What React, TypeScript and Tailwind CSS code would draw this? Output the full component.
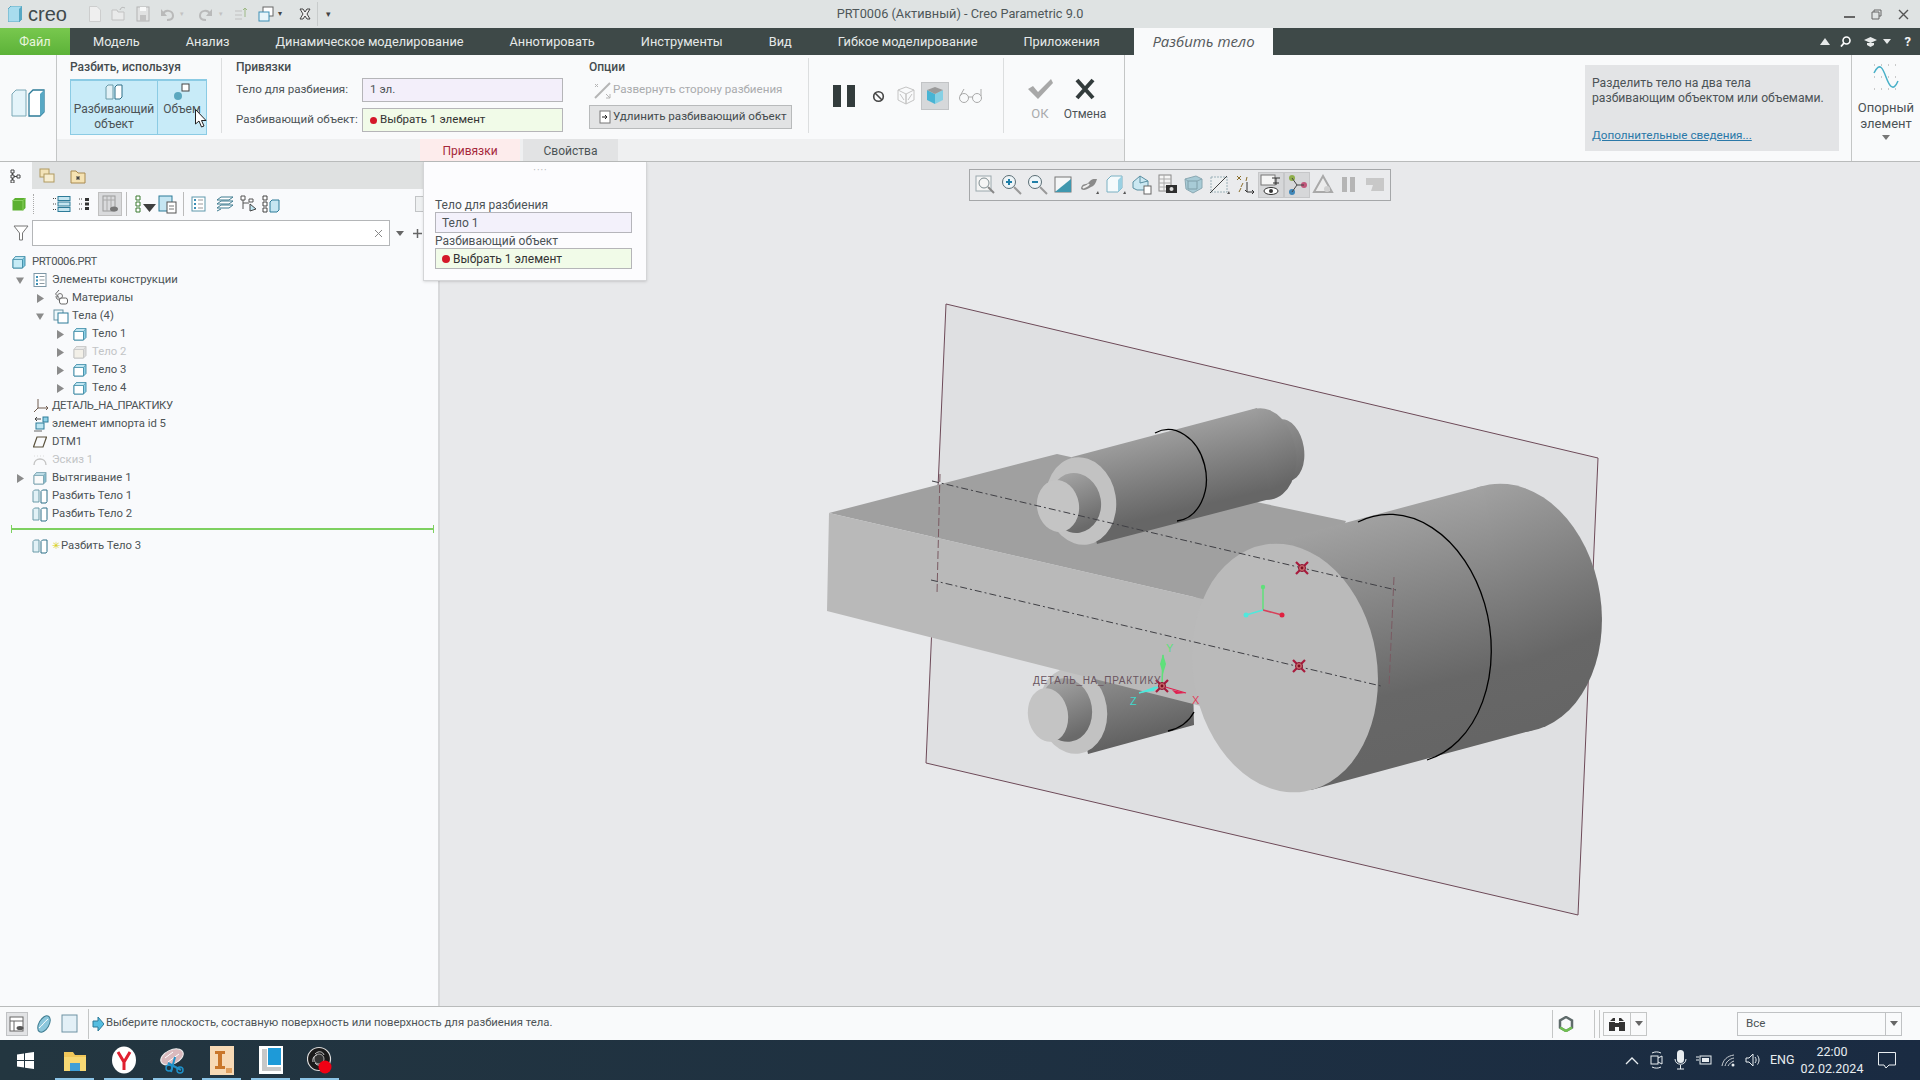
import type { ReactNode } from "react";

const MENU = ["Модель", "Анализ", "Динамическое моделирование", "Аннотировать", "Инструменты", "Вид", "Гибкое моделирование", "Приложения"];

const Ico = ({ s = 18, w, h, children, className = "" }: { s?: number; w?: number; h?: number; children: ReactNode; className?: string }) => (
  <svg width={w ?? s} height={h ?? s} viewBox={`0 0 ${w ?? s} ${h ?? s}`} fill="none" className={`shrink-0 ${className}`}>
    {children}
  </svg>
);

const Cube = ({ face = "#ffffff", side = "#8fd0e6", top = "#bfe6f2", line = "#3d8aa5" }) => (
  <Ico s={14}>
    <path d="M1 4.5 3.5 1.5H13V10.5L10.5 13H1Z" fill={side} stroke={line} strokeWidth="0.9" />
    <path d="M1 4.5H10.5V13H1Z" fill={face} stroke={line} strokeWidth="0.9" />
    <path d="M1 4.5 3.5 1.5H13L10.5 4.5Z" fill={top} stroke={line} strokeWidth="0.6" />
  </Ico>
);

const SplitIcon = () => (
  <Ico s={16} className="-ml-px">
    <path d="M1 3.5 2.5 2H7V14H1Z" fill="#e2f1f6" stroke="#6b9aa8" />
    <path d="M9 3.5 10.5 2H15V13.5L14 15H9Z" fill="#fff" stroke="#2d6f87" />
  </Ico>
);

const Arrow = ({ open }: { open?: boolean }) => (
  <svg width="8" height="9" viewBox="0 0 8 9">
    {open ? <path d="M0 1.5H8L4 8Z" fill="#8b8b8b" /> : <path d="M1 0 8 4.5 1 9Z" fill="#8b8b8b" />}
  </svg>
);

type Row = { label: string; level: number; arrow?: "open" | "closed"; icon: ReactNode; dim?: boolean; caps?: boolean };

const TREE: Row[] = [
  { label: "PRT0006.PRT", level: 0, caps: true, icon: <Cube face="#c6ebf6" side="#7ec8df" /> },
  {
    label: "Элементы конструкции",
    level: 1,
    arrow: "open",
    icon: (
      <Ico s={14}>
        <rect x="1" y="0.5" width="12" height="13" fill="#fff" stroke="#7c96a5" />
        <path d="M3 3h2v2H3zM3 6.5h2v2H3zM3 10h2v2H3z" fill="#3d8fb5" />
        <path d="M6.5 3.5h5M6.5 7h5M6.5 10.5h5" stroke="#8d9aa2" />
      </Ico>
    ),
  },
  {
    label: "Материалы",
    level: 2,
    arrow: "closed",
    icon: (
      <Ico s={16}>
        <path d="M6 0 2.5 4l3 3M3 6c0 3 2 4 4 4" stroke="#666" />
        <rect x="6.5" y="8" width="8" height="6" rx="2" stroke="#666" fill="#fff" />
        <circle cx="7" cy="6" r="2.5" stroke="#777" />
      </Ico>
    ),
  },
  {
    label: "Тела (4)",
    level: 2,
    arrow: "open",
    icon: (
      <Ico s={16}>
        <rect x="1" y="2" width="9" height="10" fill="#eef8fb" stroke="#6b93a3" />
        <rect x="5" y="5" width="10" height="10" fill="#fff" stroke="#2d7b98" />
      </Ico>
    ),
  },
  { label: "Тело 1", level: 3, arrow: "closed", icon: <Cube /> },
  { label: "Тело 2", level: 3, arrow: "closed", dim: true, icon: <Cube face="#f3f0e8" side="#dcdcdc" top="#e8e8e8" line="#c4c4c4" /> },
  { label: "Тело 3", level: 3, arrow: "closed", icon: <Cube /> },
  { label: "Тело 4", level: 3, arrow: "closed", icon: <Cube /> },
  {
    label: "ДЕТАЛЬ_НА_ПРАКТИКУ",
    level: 1,
    caps: true,
    icon: (
      <Ico s={16}>
        <path d="M5 1V10L1 14M5 10H15" stroke="#6f5b4e" />
        <path d="M13 8l2 2-2 2" stroke="#6f5b4e" />
      </Ico>
    ),
  },
  {
    label: "элемент импорта id 5",
    level: 1,
    icon: (
      <Ico s={16}>
        <rect x="10" y="1" width="5" height="5" fill="#8fd0e6" stroke="#2d7b98" />
        <path d="M8 3H2M4 1 2 3l2 2" stroke="#444" />
        <rect x="3" y="7" width="8" height="6" fill="#bfe6f2" stroke="#2d7b98" />
        <path d="M1 15H9" stroke="#666" />
      </Ico>
    ),
  },
  {
    label: "DTM1",
    level: 1,
    icon: (
      <Ico s={14}>
        <path d="M4 2H13.5L10 12H0.5Z" stroke="#5a513c" strokeWidth="1.2" />
      </Ico>
    ),
  },
  {
    label: "Эскиз 1",
    level: 1,
    dim: true,
    icon: (
      <Ico s={14}>
        <path d="M1 12C1 4 13 4 13 12" stroke="#c4c4c4" strokeWidth="1.4" />
        <path d="M1 3H13" stroke="#dcdcdc" strokeDasharray="1 2" />
      </Ico>
    ),
  },
  { label: "Вытягивание 1", level: 1, arrow: "closed", icon: <Cube face="#fafafa" side="#86bccd" top="#bcdce6" line="#7ba3b0" /> },
  { label: "Разбить Тело 1", level: 1, icon: <SplitIcon /> },
  { label: "Разбить Тело 2", level: 1, icon: <SplitIcon /> },
];

const TreeRow = ({ r }: { r: Row }) => (
  <div className="h-[18px] flex items-center" style={{ paddingLeft: r.level === 0 ? 12 : 14 + (r.level - 1) * 20 }}>
    {r.level > 0 && <span className="w-[19px] pl-[2px] flex items-center">{r.arrow && <Arrow open={r.arrow === "open"} />}</span>}
    <span className={`w-[14px] flex items-center ${r.level === 0 ? "mr-[6px]" : "mr-[5px]"}`}>{r.icon}</span>
    <span className={`${r.dim ? "text-[#c2c4c6]" : "text-[#4c5356]"} ${r.caps ? "tracking-[-0.4px]" : ""}`}>{r.label}</span>
  </div>
);

const TreeTools = () => (
  <div className="h-[30px] w-[423px] flex items-center">
    <span className="ml-[12px] w-[21px] flex">
      <Ico s={14}>
        <path d="M0.5 3.5 3 1H13.5V11L11 13.5H.5Z" fill="#5cb030" />
        <path d="M11 3.5V13.5M.5 3.5H11L13.5 1" stroke="#8ad060" />
      </Ico>
    </span>
    <span className="w-[3px] h-[20px] border-l border-dotted border-[#aaa]" />
    <span className="ml-[17px] w-[22px] flex">
      <Ico s={18}>
        <path d="M0 3.5H3M0 9H3M0 14.5H3" stroke="#444" strokeDasharray="1 1" />
        <rect x="5" y="1.5" width="12" height="4" fill="#c5e5f0" stroke="#2d7b98" />
        <rect x="5" y="7" width="12" height="4" fill="#c5e5f0" stroke="#2d7b98" />
        <rect x="5" y="12.5" width="12" height="4" fill="#c5e5f0" stroke="#2d7b98" />
      </Ico>
    </span>
    <span className="ml-[2px] w-[11px] flex">
      <Ico s={14}>
        <path d="M2 2h3M2 7h3M2 12h3" stroke="#444" strokeDasharray="1 1" />
        <path d="M8 1h4v3H8zM8 5.5h4v3H8zM8 10h4v3H8z" fill="#333" />
      </Ico>
    </span>
    <span className="ml-[10px] w-[24px] h-[24px] bg-[#d9dadc] border border-[#c0c0c0] flex items-center justify-center">
      <Ico s={18}>
        <rect x="2" y="1" width="12" height="15" stroke="#9a9a9a" />
        <path d="M2 5H14M6 1V16M10 1V16" stroke="#aaa" />
        <ellipse cx="13" cy="14" rx="4" ry="2.5" fill="#777" />
      </Ico>
    </span>
    <span className="ml-[4px] w-px h-[24px] bg-[#bbb]" />
    <span className="ml-[6px] w-[23px] flex">
      <Ico w={24} h={18}>
        <path d="M3 1h4v4H3zM3 7h4v4H3zM3 13h4v4H3z" stroke="#3a7a30" fill="#fff" />
        <path d="M10 9h13l-6.500 8Z" fill="#3f3f3f" />
      </Ico>
    </span>
    <span className="ml-[2px] w-[22px] flex">
      <Ico s={20}>
        <rect x="1" y="2" width="13" height="15" fill="#c6e6f2" stroke="#2d7b98" />
        <rect x="9" y="8" width="9" height="11" fill="#fff" stroke="#555" />
        <path d="M11 12h5M11 15h5" stroke="#777" />
      </Ico>
    </span>
    <span className="ml-[3px] w-px h-[24px] bg-[#bbb]" />
    <span className="ml-[7px] w-[25px] flex">
      <Ico s={16}>
        <rect x="1" y="1" width="13" height="14" fill="#fff" stroke="#5f98ab" />
        <path d="M3 4h2M3 8h2M3 12h2" stroke="#3d8fb5" strokeWidth="2" />
        <path d="M7 4h5M7 8h5M7 12h5" stroke="#999" />
      </Ico>
    </span>
    <span className="w-[24px] flex">
      <Ico s={18}>
        <path d="M1 5 5 2H17L13 5ZM1 9 5 6H17L13 9ZM1 13 5 10H17L13 13Z" fill="#fff" stroke="#3d7b8f" />
        <path d="M1 16 5 14" stroke="#3d7b8f" />
      </Ico>
    </span>
    <span className="w-[22px] flex">
      <Ico s={18}>
        <path d="M1 1h4v4H1zM9 4h4v3H9z" stroke="#555" fill="#fff" />
        <path d="M3 5V14M3 8H9" stroke="#555" />
        <path d="M10 9 16 14 10 16Z" fill="#bfe6f2" stroke="#444" />
      </Ico>
    </span>
    <span className="w-[20px] flex">
      <Ico s={18}>
        <path d="M1 1h4v4H1zM1 7h4v4H1zM1 13h4v4H1z" stroke="#444" fill="#fff" />
        <path d="M8 7 10 5H17V15L15 17H8Z" fill="#c6e6f2" stroke="#2d7b98" />
      </Ico>
    </span>
    <span className="ml-auto w-[8px] h-[16px] bg-[#eef0f1] border border-r-0 border-[#c2c4c6]" />
  </div>
);

const ViewIcons: ReactNode[] = [
  <><rect x="1" y="2" width="15" height="15" fill="#f5f5f5" stroke="#9aa8ad" /><circle cx="9" cy="9" r="5" stroke="#7e8c90" /><path d="m13 13 6 6" stroke="#888" strokeWidth="2" /></>,
  <><circle cx="8" cy="8" r="6.500" fill="#eef5f8" stroke="#5a6d75" /><path d="M5 8h6M8 5v6" stroke="#1f7fa8" strokeWidth="2" /><path d="m13 13 7 7" stroke="#999" strokeWidth="2" /></>,
  <><circle cx="8" cy="8" r="6.500" fill="#eef5f8" stroke="#5a6d75" /><path d="M5 8h6" stroke="#1f7fa8" strokeWidth="2" /><path d="m13 13 7 7" stroke="#999" strokeWidth="2" /></>,
  <><rect x="2" y="3" width="16" height="15" fill="#f4f6f7" stroke="#777" /><path d="M2 18 18 5V18Z" fill="#3f97ae" /></>,
  <><path d="M2 14c2-6 5-2 8-6 3-4 6-3 8-3-1 4-3 7-6 8-3 2-6 3-7 3-2 0-3-1-3-2Z" fill="#8a8a8a" /><path d="M4 14c2-2 4-1 6-4" stroke="#eee" strokeWidth="2" /><path d="m19 17 1 3h-3Z" fill="#555" /></>,
  <><path d="M2 6 6 2H17V14L13 18H2Z" fill="#f4fafc" stroke="#7ab0c2" /><path d="M13 6V18L17 14V2Z" fill="#9ad0e2" /><path d="m20 17 1 3h-3Z" fill="#555" /></>,
  <><path d="M2 8 9 2 17 7V16H6L2 14Z" fill="#cbe8f2" stroke="#5a8fa2" /><path d="M9 2V9L17 7" stroke="#5a8fa2" /><rect x="13" y="12" width="7" height="8" fill="#fff" stroke="#666" /></>,
  <><rect x="2" y="1" width="12" height="16" fill="#f5f5f5" stroke="#888" /><path d="M2 5H14M2 9H14M2 13H14M7 1V17" stroke="#aaa" /><rect x="9" y="11" width="11" height="8" fill="#2e2e2e" /><circle cx="14.500" cy="15" r="2" fill="#ddd" /></>,
  <><path d="M2 5 13 2l6 3v9l-9 5-7-4Z" fill="#a8cbd6" stroke="#8aa8b2" /><path d="M5 7h9v8H5Z" stroke="#7f9ea8" /><path d="M2 5l3 2M19 5l-5 2" stroke="#8aa8b2" /></>,
  <><path d="M2 3H18V18H2Z" fill="#eceff0" stroke="#9ab0b8" strokeDasharray="2 1" /><path d="M1 19 18 2" stroke="#444" /><path d="m20 17 1 3h-3Z" fill="#555" /></>,
  <><path d="M2 2l4 4M6 2 2 6M8 9 6 13M12 3l-1 4M4 18l2-4" stroke="#8a6d2a" /><path d="M12 8V18H19M12 18l-2-2M17 16l2 2-2 2" stroke="#333" /></>,
  <><rect x="1" y="1" width="14" height="10" fill="#f5f5f5" stroke="#777" /><path d="M12 4h8M16 4v7M13 9h6" stroke="#333" /><ellipse cx="11" cy="17" rx="7" ry="3.500" fill="#fff" stroke="#333" /><circle cx="11" cy="17" r="2" fill="#333" /></>,
  <><circle cx="6" cy="4" r="3" fill="#8fae4c" /><circle cx="18" cy="11" r="3" fill="#c0567a" /><circle cx="6" cy="18" r="3" fill="#3f86b8" /><path d="M6 4 11 11 6 18M11 11H18" stroke="#444" /></>,
  <><path d="M11 2 20 18H2Z" stroke="#a9a9a9" strokeWidth="2" fill="#ececec" /><circle cx="15" cy="15" r="3" fill="#d0d0d0" /></>,
  <><path d="M4 3h5v15H4zM12 3h5v15h-5z" fill="#b5b5b5" /></>,
  <><path d="M2 4H20V17H7L9 11 2 11Z" fill="#c8c8c8" /></>,
];

const ViewToolbar = () => (
  <div className="absolute left-[529px] top-[7px] w-[422px] h-[32px] bg-[#eaebed] border border-[#a5a7a9] flex items-center pl-[3px]">
    {ViewIcons.map((ic, i) => (
      <span key={i} className={`w-[26px] h-[26px] flex items-center justify-center mr-[-0.05px] ${i === 11 || i === 12 ? "bg-[#d6d7d9] border border-[#c6c7c9]" : ""}`}>
        <Ico s={22}>{ic}</Ico>
      </span>
    ))}
  </div>
);

const Marker = ({ x, y }: { x: number; y: number }) => (
  <g transform={`translate(${x} ${y})`}>
    <path d="M-6-6-2-2M6-6 2-2M-6 6-2 2M6 6 2 2" stroke="#a81a3c" strokeWidth="2.200" />
    <circle r="3.500" fill="#c9666a" stroke="#8a1030" />
    <circle r="1.400" fill="#7a1020" />
  </g>
);

const Model = () => (
  <svg width="1480" height="844" viewBox="440 162 1480 844" fill="none" className="absolute inset-0">
    <defs>
      <linearGradient id="big" gradientUnits="userSpaceOnUse" x1="1375" y1="500" x2="1435" y2="750">
        <stop offset="0" stopColor="#a6a6a6" />
        <stop offset="0.75" stopColor="#676767" />
        <stop offset="1" stopColor="#656565" />
      </linearGradient>
      <linearGradient id="up" gradientUnits="userSpaceOnUse" x1="1165" y1="420" x2="1190" y2="525">
        <stop offset="0" stopColor="#a5a5a5" />
        <stop offset="0.85" stopColor="#666666" />
        <stop offset="1" stopColor="#666666" />
      </linearGradient>
      <linearGradient id="low" gradientUnits="userSpaceOnUse" x1="1130" y1="668" x2="1148" y2="742">
        <stop offset="0" stopColor="#8f8f8f" />
        <stop offset="1" stopColor="#5f5f5f" />
      </linearGradient>
      <linearGradient id="step" x1="0" y1="0" x2="0.2" y2="1">
        <stop offset="0" stopColor="#a8a8a8" />
        <stop offset="1" stopColor="#6a6a6a" />
      </linearGradient>
    </defs>
    <polygon points="946,304 1598,458 1578,915 926,763" fill="#dfe0e2" stroke="#6d4a58" strokeWidth="1" />

    {/* block top */}
    <polygon points="829,513 1057,454 1075,458 1261,503 1346,521 1290,640 1194,597" fill="#a0a0a0" />

    {/* upper shaft */}
    <ellipse cx="1285" cy="450" rx="19" ry="31" transform="rotate(-9 1285 450)" fill="url(#up)" />
    <ellipse cx="1264" cy="454" rx="32" ry="46" transform="rotate(-9 1264 454)" fill="url(#up)" />
    <polygon points="1072,457 1257,408 1270,499 1097,544" fill="url(#up)" />
    <path d="M1155 433A35 46 -9 1 1 1177 521" stroke="#000" strokeWidth="1.300" />
    <ellipse cx="1081" cy="501" rx="35" ry="44" transform="rotate(-9 1081 501)" fill="#c2c2c2" />
    <ellipse cx="1075" cy="503" rx="26" ry="30" transform="rotate(-9 1075 503)" fill="url(#step)" />
    <ellipse cx="1058" cy="506" rx="21" ry="26" transform="rotate(-9 1058 506)" fill="#c4c4c4" />

    {/* lower shaft */}
    <polygon points="1070,664 1192,640 1194,725 1088,754" fill="url(#low)" />
    <path d="M1168 731Q1186 727 1194 712" stroke="#000" strokeWidth="1.300" />
    <ellipse cx="1073" cy="711" rx="34" ry="43" transform="rotate(-9 1073 711)" fill="#c2c2c2" />
    <ellipse cx="1066" cy="710" rx="26" ry="32" transform="rotate(-9 1066 710)" fill="url(#step)" />
    <ellipse cx="1048" cy="715" rx="20" ry="27" transform="rotate(-9 1048 715)" fill="#c4c4c4" />

    {/* block front */}
    <polygon points="829,513 1194,597 1260,612 1260,721 827,611" fill="#b9b9b9" />

    {/* main cylinder */}
    <ellipse cx="1509" cy="608" rx="92" ry="125" transform="rotate(-9 1509 608)" fill="url(#big)" />
    <polygon points="1259,546 1483,486 1533,730 1311,790" fill="url(#big)" />
    <path d="M1358 522A92 125 -9 1 1 1427 760" stroke="#000" strokeWidth="1.300" />
    <ellipse cx="1285" cy="668" rx="92" ry="125" transform="rotate(-9 1285 668)" fill="#bababa" />

    {/* sketch lines */}
    <g stroke="#3f3f44" strokeWidth="1" strokeDasharray="7 3 2 3">
      <path d="M932 481 1396 590" />
      <path d="M931 580 1381 686" />
    </g>
    <g stroke="#7a5a62" strokeWidth="1" strokeDasharray="8 3">
      <path d="M940 474 937 594" />
      <path d="M1394 577 1389 687" />
    </g>

    <Marker x={1302} y={568} />
    <Marker x={1299} y={666} />

    {/* csys */}
    <path d="M1263 610V587" stroke="#5fe07a" strokeWidth="1.500" />
    <circle cx="1263" cy="587" r="2.200" fill="#5fe07a" />
    <path d="M1263 610 1282 615" stroke="#d8405a" strokeWidth="1.500" />
    <circle cx="1282" cy="615" r="2.500" fill="#e02040" />
    <path d="M1263 610 1246 615" stroke="#50e8dc" strokeWidth="1.500" />
    <circle cx="1246" cy="615" r="2.500" fill="#50e8dc" />

    <path d="M1162 686 1163 655" stroke="#5fe07a" strokeWidth="1.500" />
    <path d="M1163 654 1160 664 1163 674 1166 664Z" fill="#5fe07a" />
    <path d="M1162 686 1186 693" stroke="#e02050" strokeWidth="1.200" />
    <path d="M1172 690 1186 693 1176 694Z" fill="#e02050" />
    <path d="M1162 686 1139 693" stroke="#50e8dc" strokeWidth="1.500" />
    <path d="M1139 693 1156 686 1154 691Z" fill="#50e8dc" />
    <Marker x={1162} y={686} />
    <g fontFamily="'Liberation Sans', sans-serif" fontSize="11">
      <text x="1166" y="652" fill="#5fe07a">Y</text>
      <text x="1192" y="704" fill="#e0405a">X</text>
      <text x="1130" y="705" fill="#40d8cc">Z</text>
      <text x="1033" y="684" fill="#6a5560" letterSpacing="0.700" fontSize="10">ДЕТАЛЬ_НА_ПРАКТИКУ</text>
    </g>
  </svg>
);

const Taskbar = () => (
  <div className="h-[40px] bg-gradient-to-r from-[#233640] to-[#1a2b42] flex items-center text-[#e8edf0] relative">
    <span className="w-[50px] flex justify-center pl-[1px]">
      <svg width="17" height="17" viewBox="0 0 17 17">
        <path d="M0 2.500 7 1.500V8H0ZM8 1.300 17 0V8H8ZM0 9H7V15.500L0 14.500ZM8 9H17V17L8 15.700Z" fill="#fff" />
      </svg>
    </span>
    {[
      <svg width="26" height="26" viewBox="0 0 26 26" key="f">
        <path d="M2 5h9l2 3h11v16H2Z" fill="#f0c75a" />
        <path d="M2 10h22v14H2Z" fill="#f7d873" />
        <path d="M8 16h10v8H8Z" fill="#3f9fd8" />
      </svg>,
      <svg width="26" height="28" viewBox="0 0 26 28" key="y">
        <ellipse cx="13" cy="14" rx="12" ry="13.500" fill="#fff" />
        <path d="M7 6 13 16 19 6M13 16V24" stroke="#e02030" strokeWidth="3" fill="none" />
      </svg>,
      <svg width="28" height="28" viewBox="0 0 28 28" key="s">
        <ellipse cx="13" cy="11" rx="12" ry="7" transform="rotate(-25 13 11)" fill="#d9b9bd" stroke="#eee" />
        <path d="M6 12 14 6M9 16l11-8" stroke="#fff" />
        <path d="M9 17 22 24M16 11 12 26" stroke="#1f90c8" strokeWidth="2" />
        <circle cx="10" cy="22" r="3" stroke="#1f90c8" strokeWidth="1.500" fill="none" />
        <circle cx="21" cy="24" r="3" stroke="#1f90c8" strokeWidth="1.500" fill="none" />
      </svg>,
      <svg width="24" height="29" viewBox="0 0 24 29" key="i">
        <rect width="24" height="29" fill="#f7d9b5" />
        <path d="M5 5h10v3h-3v12h3v3H5v-3h3V8H5Z" fill="#c9762a" />
        <path d="M16 22h6v5h-6Z" fill="#e0a060" />
      </svg>,
      <svg width="24" height="28" viewBox="0 0 24 28" key="w">
        <rect width="24" height="28" fill="#fff" />
        <rect x="9" y="2" width="13" height="17" fill="#1e9ad8" />
        <path d="M3 3h5v18h14v4H3Z" fill="#c8c8c8" />
      </svg>,
      <svg width="26" height="28" viewBox="0 0 26 28" key="o">
        <circle cx="12" cy="13" r="11.500" fill="#1a1a1a" stroke="#ddd" strokeWidth="1.200" />
        <circle cx="12" cy="13" r="5" fill="#333" stroke="#aaa" />
        <path d="M8 8c4-4 8-2 9 1M6 16c-1-4 2-7 4-7M18 17c-3 3-8 3-10 0" stroke="#ccc" fill="none" />
        <circle cx="18" cy="21" r="6.500" fill="#f00014" />
      </svg>,
    ].map((ic, i) => (
      <span key={i} className="w-[49px] h-[40px] flex items-center justify-center relative">
        {ic}
        <span className="absolute bottom-0 left-[5px] right-[5px] h-[2px] bg-[#8cc4e6]" />
      </span>
    ))}
    <div className="ml-auto flex items-center h-full">
      <svg width="14" height="9" viewBox="0 0 14 9" className="mr-[11px]"><path d="M1 8 7 2l6 6" stroke="#e8edf0" strokeWidth="1.300" fill="none" /></svg>
      <svg width="13" height="18" viewBox="0 0 13 18" className="mr-[11px]"><rect x="1" y="5" width="7" height="8" stroke="#e8edf0" fill="none" /><path d="M8 7 12 5V13L8 11M2 2c3-1.500 6-1.500 9 0M2 16c3 1.500 6 1.500 9 0" stroke="#e8edf0" fill="none" /></svg>
      <svg width="13" height="20" viewBox="0 0 13 20" className="mr-[9px]"><rect x="3" y="0" width="7" height="13" rx="3.500" fill="#e8edf0" /><path d="M1 9c0 7 11 7 11 0M6.500 15v4M3 19h7" stroke="#e8edf0" fill="none" /></svg>
      <svg width="16" height="11" viewBox="0 0 16 11" className="mr-[9px]"><rect x="4" y="1" width="11" height="8" stroke="#e8edf0" fill="none" /><rect x="6" y="3" width="7" height="4" fill="#e8edf0" /><path d="M0 2h3M0 5h3" stroke="#e8edf0" /></svg>
      <svg width="14" height="13" viewBox="0 0 14 13" className="mr-[10px]"><path d="M1 12C2 6 6 2 13 1M4 12C5 8 8 5 13 4M7 12C8 10 10 8 13 7" stroke="#c8cdd2" fill="none" /><circle cx="12" cy="11" r="1.500" fill="#e8edf0" /></svg>
      <svg width="16" height="14" viewBox="0 0 16 14" className="mr-[9px]"><path d="M1 5H4L8 1V13L4 9H1Z" stroke="#e8edf0" fill="none" /><path d="M10 4c1.500 2 1.500 4 0 6M12.500 2.500c2 3 2 6 0 9" stroke="#e8edf0" fill="none" /></svg>
      <span className="text-[12.500px] w-[27px] mr-[4px] whitespace-nowrap">ENG</span>
      <span className="w-[62px] flex flex-col items-center text-[12.500px] leading-[17px] mr-[15px]">
        <span>22:00</span>
        <span>02.02.2024</span>
      </span>
      <svg width="18" height="17" viewBox="0 0 18 17" className="mr-[24px]"><path d="M.5.5H17.500V13H11L8 16 6 13H.5Z" stroke="#e8edf0" fill="none" /></svg>
    </div>
  </div>
);

export default function App() {
  return (
    <div className="w-[1920px] h-[1080px] overflow-hidden flex flex-col bg-[#e8e9eb] text-[11.600px] font-['Roboto','Open_Sans',sans-serif] text-[#4c5356]">
      {/* title bar */}
      <div className="h-[28px] bg-[#dfe3e3] flex items-center shrink-0">
        <div className="flex-1 basis-0 flex items-center">
          <span className="ml-[8px] mr-[6px] flex">
            <Ico w={14} h={16}>
              <path d="M0 3 3 0H14V13L11 16H0Z" fill="#a8dcee" stroke="#5fa9c2" />
              <path d="M11 3V16L14 13V0Z" fill="#58a8c4" />
            </Ico>
          </span>
          <span className="w-[55px] text-[20px] leading-none text-[#404a4c] font-['Liberation_Sans',sans-serif]">creo</span>
          <span className="flex items-center opacity-80">
            <span className="w-[24px] flex justify-center"><Ico w={12} h={16}><path d="M.5.5H8L11.500 4V15.500H.5Z" stroke="#c9c9c9" fill="#f3f3f3" /></Ico></span>
            <span className="w-[24px] flex justify-center"><Ico w={16} h={16}><path d="M1 4h5l1 2h6v8H1Z" stroke="#bbb" fill="#ececec" /><path d="M9 4c1-3 3-3 5-2" stroke="#aaa" /></Ico></span>
            <span className="w-[24px] flex justify-center"><Ico w={14} h={16}><rect x="1" y="1" width="12" height="14" stroke="#aaa" fill="#e2e2e2" /><rect x="4" y="9" width="6" height="6" fill="#bbb" /><rect x="4" y="1" width="6" height="4" fill="#fff" /></Ico></span>
            <span className="w-[25px] flex justify-center"><Ico s={15}><path d="M3 7c2-5 10-4 10 2 0 3-3 4-6 4" stroke="#b0b0b0" strokeWidth="2" /><path d="M1 2V9H7Z" fill="#b0b0b0" /></Ico></span>
            <span className="w-[12px] text-[7px] text-[#bbb]">▾</span>
            <span className="w-[27px] flex justify-center"><Ico s={15}><path d="M12 7C10 2 2 3 2 9c0 3 3 4 6 4" stroke="#b0b0b0" strokeWidth="2" /><path d="M14 2V9H8Z" fill="#b0b0b0" /></Ico></span>
            <span className="w-[12px] text-[7px] text-[#bbb]">▾</span>
            <span className="w-[21px] flex justify-center"><Ico s={15}><path d="M1 4h7M1 8h7M1 12h7" stroke="#bbb" /><path d="M11 1v9M9 3l2-2 2 2" stroke="#8fb070" /></Ico></span>
          </span>
          <span className="ml-[2px] w-[24px] flex justify-center"><Ico s={16}><rect x="5" y="1" width="10" height="9" stroke="#666" fill="#fff" /><rect x="1" y="6" width="10" height="9" stroke="#3d8fb5" fill="#e8f5fa" /></Ico></span>
          <span className="w-[12px] text-[8px] text-[#444]">▾</span>
          <span className="ml-[9px] w-[14px] flex"><Ico s={12}><path d="M1 1h3l2 3 2-3h3L8 6l3 5H8L6 8l-2 3H1l3-5Z" fill="#eee" stroke="#444" /></Ico></span>
          <span className="ml-[4px] mr-[8px] w-px h-[24px] bg-[#c8cccc]" />
          <span className="text-[9px] text-[#444] leading-none">▾</span>
        </div>
        <span className="text-[#4e5759] text-[12.750px] whitespace-nowrap">PRT0006 (Активный) - Creo Parametric 9.0</span>
        <div className="flex-1 basis-0 flex justify-end items-center text-[#555]">
          <span className="w-[11px] h-[2px] bg-[#666] mt-[6px] mr-[16px]" />
          <span className="mr-[16px] flex"><Ico s={11}><path d="M3 3V1H10V7H8M1 3H8V10H1Z" stroke="#666" /></Ico></span>
          <span className="mr-[11px] flex"><Ico s={11}><path d="M1 1 10 10M10 1 1 10" stroke="#555" strokeWidth="1.400" /></Ico></span>
        </div>
      </div>

      {/* menu */}
      <div className="h-[27px] bg-[#3e4948] flex items-center shrink-0 text-[12.750px] text-[#e6e9e9] relative">
        <span className="w-[70px] h-full bg-gradient-to-b from-[#78c84e] to-[#5cb238] flex items-center justify-center text-[#e8f5dc]">Файл</span>
        <div className="w-[1064px] flex items-center pl-[23px] gap-[46px]">
          {MENU.map((m) => (
            <span key={m} className="whitespace-nowrap">{m}</span>
          ))}
        </div>
        <span className="w-[139px] h-full bg-[#f9fafb] text-[#55595b] text-[15px] font-['Open_Sans',sans-serif] italic flex items-center justify-center">Разбить тело</span>
        <div className="ml-auto flex items-center text-white">
          <span className="mr-[10px] flex"><Ico w={10} h={7}><path d="M0 7 5 0l5 7Z" fill="#e6e9e9" /></Ico></span>
          <span className="mr-[13px] flex"><Ico s={11}><circle cx="6.500" cy="4.500" r="3.500" stroke="#fff" strokeWidth="1.600" /><path d="M4 7 1 10.500" stroke="#fff" strokeWidth="1.800" /></Ico></span>
          <span className="mr-[6px] flex"><Ico w={13} h={10}><path d="M6.500 0 13 3 6.500 6 0 3ZM3 6v2l3.500 2L10 8V6" fill="#e6e9e9" /></Ico></span>
          <span className="mr-[14px] flex"><Ico w={8} h={5}><path d="M0 0h8L4 5Z" fill="#e6e9e9" /></Ico></span>
          <span className="mr-[9px] font-bold text-[13px] text-[#f4f4f4]">?</span>
        </div>
      </div>

      {/* ribbon */}
      <div className="h-[107px] bg-[#f9fafb] border-b border-[#b9bbbb] flex shrink-0">
        <div className="w-[57px] border-r border-[#c4c6c6] flex items-center justify-center pb-[11px]">
          <Ico w={34} h={28}>
            <path d="M1 5 5 1H15V27H1Z" fill="#e4f4fa" stroke="#7ba8b6" />
            <path d="M18 5 22 1H33V23L29 27H18Z" fill="#ffffff" stroke="#2d7b98" strokeWidth="1.300" />
            <path d="M29 5V27L33 23V1Z" fill="#58a8c4" />
          </Ico>
        </div>
        <div className="w-[1068px] border-r border-[#c4c6c6] flex flex-col">
          <div className="h-[84px] flex items-stretch">
            <div className="w-[165px] pl-[13px] pt-[5px] my-[3px] mb-[6px] border-r border-[#dcdedf] shrink-0">
              <div className="font-medium text-[12px] leading-[15px] text-[#454c4f] -mt-[3px] mb-[4px]">Разбить, используя</div>
              <div className="w-[137px] h-[56px] bg-[#c8ebf8] border border-[#8bcbe4] border-t-2 flex text-center text-[12px] leading-[15px]">
                <div className="w-[87px] border-r border-[#8bcbe4] flex flex-col items-center">
                  <Ico w={18} h={18} className="mt-[2px]">
                    <path d="M1 4 3 2H8V16H1Z" stroke="#6b9aa8" fill="#e2f1f6" />
                    <path d="M10 4 12 2H17V14L15 16H10Z" stroke="#2d6f87" fill="#fff" />
                  </Ico>
                  <span className="mt-[1px]">Разбивающий</span>
                  <span>объект</span>
                </div>
                <div className="relative flex-1 flex flex-col items-center">
                  <Ico w={18} h={18} className="mt-[2px]">
                    <circle cx="5" cy="13" r="4" fill="#5ca8bf" />
                    <rect x="9" y="1" width="7" height="7" fill="#fff" stroke="#444" />
                  </Ico>
                  <span className="mt-[1px]">Объем</span>
                  <svg width="12" height="19" viewBox="0 0 12 19" className="absolute left-[37px] top-[28px]">
                    <path d="M.5.5V15L4 12 6.500 18 9 17 6.500 11.500H11Z" fill="#fff" stroke="#222" />
                  </svg>
                </div>
              </div>
            </div>
            <div className="w-[367px] pl-[14px] pt-[5px] shrink-0">
              <div className="font-medium text-[12px] leading-[15px] text-[#454c4f] mb-[3px]">Привязки</div>
              <div className="flex items-center h-[24px] mb-[6px]">
                <span className="w-[126px]">Тело для разбиения:</span>
                <span className="w-[201px] h-[24px] bg-[#f3effa] border border-[#b5b5b8] flex items-center pl-[7px]">1 эл.</span>
              </div>
              <div className="flex items-center h-[24px]">
                <span className="w-[126px] whitespace-nowrap">Разбивающий объект:</span>
                <span className="w-[201px] h-[24px] bg-[#f1fbe8] border border-[#b5b5b8] flex items-center pl-[7px] text-[#333]">
                  <span className="w-[7px] h-[7px] rounded-full bg-[#d41828] mr-[3px]" />
                  Выбрать 1 элемент
                </span>
              </div>
            </div>
            <div className="w-[220px] pt-[5px] my-[3px] mb-[6px] border-r border-[#dcdedf] shrink-0">
              <div className="font-medium text-[12px] leading-[15px] text-[#454c4f] -mt-[3px] mb-[3px]">Опции</div>
              <div className="flex items-center h-[24px] text-[#a9abad] ml-[4px] mb-[3px]">
                <Ico s={19} className="mr-[1px]">
                  <path d="M2 17 17 2" stroke="#b5b5b5" strokeWidth="2" />
                  <path d="M2 3l3 3M5 3 2 6M13 13l4 4M17 13v4h-4" stroke="#b5b5b5" />
                </Ico>
                Развернуть сторону разбиения
              </div>
              <div className="w-[203px] h-[24px] bg-[#e2e3e4] border border-[#b8babb] flex items-center pl-[7px] whitespace-nowrap text-[#444b4e]">
                <Ico s={14} className="mr-[2px]">
                  <rect x="3" y="1" width="10" height="12" fill="#fff" stroke="#777" />
                  <path d="M5 7h5M8 5l2 2-2 2" stroke="#222" />
                </Ico>
                Удлинить разбивающий объект
              </div>
            </div>
            <div className="w-[195px] my-[3px] mb-[6px] border-r border-[#dcdedf] flex items-center shrink-0">
              <span className="ml-[24px] flex gap-[6px]">
                <span className="w-[8px] h-[22px] bg-[#333c3c]" />
                <span className="w-[8px] h-[22px] bg-[#333c3c]" />
              </span>
              <span className="ml-[17px] flex mt-[1px]">
                <Ico s={13}><circle cx="6.500" cy="6.500" r="4.800" stroke="#444" strokeWidth="1.600" /><path d="M3 3l7 7" stroke="#444" strokeWidth="1.600" /></Ico>
              </span>
              <span className="ml-[11px] flex">
                <Ico s={20}><path d="M2 4 10 8V18L2 14ZM18 4 10 8V18L18 14ZM2 4 10 1l8 3" stroke="#c4c4c4" /><path d="M4 8l4 6M16 8l-4 6" stroke="#c4c4c4" /></Ico>
              </span>
              <span className="ml-[5px] w-[28px] h-[28px] bg-[#d6d8da] border border-[#c2c4c6] flex items-center justify-center">
                <Ico s={20}><path d="M2 4 10 8V18L2 14Z" fill="#48b4d4" /><path d="M18 4 10 8V18L18 14Z" fill="#86d0e4" /><path d="M2 4 10 1l8 3-8 4Z" fill="#9a9a9a" /></Ico>
              </span>
              <span className="ml-[9px] flex">
                <Ico w={26} h={16}><circle cx="6" cy="10" r="4.500" stroke="#aaa" /><circle cx="19" cy="10" r="4.500" stroke="#aaa" /><path d="M10 9h5M2 8l4-7M23 8V1" stroke="#aaa" /></Ico>
              </span>
            </div>
            <div className="flex-1 flex my-[3px] mb-[6px]">
              <div className="ml-[20px] w-[32px] flex flex-col items-center text-[#a9abad]">
                <Ico w={28} h={22} className="mt-[20px]"><path d="M2 11l5-3 5 6L25 1l2 4-15 16Z" fill="#a8a8a8" /></Ico>
                <span className="mt-[6px] text-[13px] leading-[16px]">ОК</span>
              </div>
              <div className="ml-[6px] w-[46px] flex flex-col items-center">
                <Ico s={22} className="mt-[20px]"><path d="M3 2 19 20M19 2 3 20" stroke="#333c3c" strokeWidth="4" /></Ico>
                <span className="mt-[6px] text-[12px] leading-[16px]">Отмена</span>
              </div>
            </div>
          </div>
          <div className="h-[22px] bg-[#eff0f1] flex pl-[363px] leading-[24px] text-[12px] text-center">
            <span className="w-[100px] bg-[#fdecec] text-[#a5283a]">Привязки</span>
            <span className="w-[95px] ml-[3px] bg-[#e2e3e4]">Свойства</span>
          </div>
        </div>
        <div className="flex-1" />
        <div className="w-[254px] h-[86px] mt-[10px] mr-[12px] bg-[#e3e4e6] pl-[7px] pt-[11px] text-[12.200px] leading-[15px] text-[#4c5356]">
          <div>Разделить тело на два тела</div>
          <div>разбивающим объектом или объемами.</div>
          <div className="mt-[22px] text-[11.700px] text-[#2a78a8] underline">Дополнительные сведения...</div>
        </div>
        <div className="w-[69px] border-l border-[#c4c6c6] flex flex-col items-center text-[13px] leading-[16px]">
          <Ico w={28} h={28} className="mt-[8px]">
            <path d="M2 2h24M2 26h24M2 14h24" stroke="#9a9a9a" strokeDasharray="1 6" />
            <path d="M2 10C8-2 11 6 14 14s7 16 12 4" stroke="#48b0c8" strokeWidth="1.500" />
          </Ico>
          <span className="mt-[9px]">Опорный</span>
          <span>элемент</span>
          <span className="mt-[3px]"><Ico w={8} h={5}><path d="M0 0h8L4 5Z" fill="#777" /></Ico></span>
        </div>
      </div>

      {/* main */}
      <div className="flex-1 flex relative min-h-0">
        <div className="w-[438px] bg-[#f9fafc] shrink-0 flex flex-col">
          <div className="h-[27px] flex bg-[#dfe1e1] w-[423px]">
            <span className="w-[32px] bg-[#f9fafc] flex items-center justify-center">
              <Ico s={14}><path d="M2 1h3v3H2zM2 6h3v3H2zM2 11h3v3H2zM8 6h3v3H8zM3.500 4v2M3.500 9v2M5 7.500h3" stroke="#444" /></Ico>
            </span>
            <span className="w-[29px] flex items-center justify-center">
              <Ico s={16}><rect x="1" y="1" width="9" height="8" fill="#f3e3b8" stroke="#b09a60" /><rect x="5" y="6" width="10" height="8" fill="#f7edd0" stroke="#b09a60" /></Ico>
            </span>
            <span className="w-[34px] flex items-center justify-center">
              <Ico s={16}><path d="M1 3h5l2 2h7v10H1Z" fill="#f5e2b2" stroke="#a88a50" /><path d="M8 8v4M6 10h4M6.500 8.500l3 3M9.500 8.500l-3 3" stroke="#444" /></Ico>
            </span>
          </div>
          <TreeTools />
          <div className="h-[28px] flex items-center">
            <span className="w-[32px] flex justify-center pl-[9px]">
              <Ico s={16}><path d="M1 1H15L9.500 8V15H6.500V8Z" stroke="#777" fill="#fff" /></Ico>
            </span>
            <span className="w-[358px] h-[26px] bg-white border border-[#b4b6b8] flex items-center justify-end pr-[6px]">
              <Ico s={9}><path d="M1 1 8 8M8 1 1 8" stroke="#888" /></Ico>
            </span>
            <span className="ml-[6px]"><Ico w={8} h={5}><path d="M0 0h8L4 5Z" fill="#666" /></Ico></span>
            <span className="ml-[9px] flex"><Ico s={9}><path d="M0 4.500H9M4.500 0V9" stroke="#666" strokeWidth="1.500" /></Ico></span>
          </div>
          <div className="mt-[6px] text-[11.300px]">
            {TREE.map((r) => (
              <TreeRow key={r.label} r={r} />
            ))}
          </div>
          <div className="mt-[5px] ml-[12px] w-[421px] h-[2px] bg-[#7ed060] relative">
            <span className="absolute -left-px -top-[3px] w-px h-[8px] bg-[#7ed060]" />
            <span className="absolute -right-px -top-[3px] w-px h-[8px] bg-[#7ed060]" />
          </div>
          <div className="mt-[7px] h-[18px] flex items-center pl-[33px] text-[11.300px]">
            <span className="w-[14px] mr-[5px] flex"><SplitIcon /></span>
            <span className="text-[#d8d020] text-[10px] leading-none mr-[1px]">✳</span>
            Разбить Тело 3
          </div>
        </div>
        <div className="w-[2px] bg-[#d8d9db] shrink-0" />
        <div className="flex-1 relative bg-[#e8e9eb]">
          <Model />
          <ViewToolbar />
        </div>

        {/* slide-out panel */}
        <div className="absolute left-[423px] top-0 w-[224px] h-[119px] bg-[#fcfcfe] border border-[#d4d5d7] border-t-0 shadow-sm pl-[11px] text-[12px] text-[#4c5356]">
          <div className="h-[32px] text-center tracking-[1px] text-[#b5b5b5] text-[10px] leading-[18px]">····</div>
          <div className="leading-[14px] mt-[4px]">Тело для разбиения</div>
          <div className="w-[197px] h-[21px] bg-[#f3f1fb] border border-[#b5b5bb] flex items-center pl-[6px]">Тело 1</div>
          <div className="leading-[17px] -mb-[2px]">Разбивающий объект</div>
          <div className="w-[197px] h-[21px] bg-[#f1fbe8] border border-[#b5b5b8] flex items-center pl-[6px] text-[#333]">
            <span className="w-[8px] h-[8px] rounded-full bg-[#d41828] mr-[3px]" />
            Выбрать 1 элемент
          </div>
        </div>
      </div>

      {/* status */}
      <div className="h-[34px] bg-[#f9fafb] border-t border-[#b9bbbb] flex items-center shrink-0">
        <span className="ml-[6px] w-[22px] h-[24px] bg-[#e2e3e5] border border-[#c0c2c4] flex items-center justify-center">
          <Ico s={16}><rect x="1" y="1" width="13" height="14" stroke="#666" fill="#fff" /><path d="M1 5H14M5 5V15" stroke="#666" /><ellipse cx="11" cy="12" rx="3.500" ry="2" fill="#555" /></Ico>
        </span>
        <span className="ml-[7px]"><Ico w={18} h={20}><ellipse cx="9" cy="10" rx="5" ry="9" transform="rotate(30 9 10)" fill="#8cc7dc" stroke="#3d7b8f" /><path d="M4 14c3-2 5-6 9-9" stroke="#fff" /></Ico></span>
        <span className="ml-[8px]"><Ico w={17} h={19}><rect x="1" y="1" width="15" height="17" fill="#e3f0f7" stroke="#6e92a3" /></Ico></span>
        <span className="ml-[10px] w-px h-[30px] bg-[#c4c6c6]" />
        <span className="ml-[3px] mr-[2px]"><Ico w={12} h={14}><path d="M1 4H6V0L12 7 6 14V10H1Z" fill="#55bde0" stroke="#2d7b98" /></Ico></span>
        <span className="text-[11.300px] text-[#4c5356] whitespace-nowrap">Выберите плоскость, составную поверхность или поверхность для разбиения тела.</span>
        <div className="ml-auto flex items-center h-full">
          <span className="w-px h-[28px] bg-[#c4c6c6]" />
          <span className="ml-[5px]"><Ico s={16}><path d="M8 1 14 4.500V11.500L8 15 2 11.500V4.500Z" stroke="#5f6b6b" strokeWidth="2.500" /><path d="M2 11.500 8 15 14 11.500" stroke="#70c050" strokeWidth="2.500" /></Ico></span>
          <span className="ml-[20px] w-px h-[28px] bg-[#c4c6c6]" />
          <span className="ml-[4px] w-px h-[28px] bg-[#c4c6c6]" />
          <span className="ml-[3px] w-[44px] h-[24px] border border-[#c4c6c6] flex items-center">
            <span className="w-[27px] flex justify-center"><Ico w={18} h={16}><path d="M2 5h5V2H5zM16 5h-5V2h2ZM1 6h6v9H1ZM11 6h6v9h-6ZM7 7h4v4H7Z" fill="#333" /></Ico></span>
            <span className="w-[16px] h-full border-l border-[#c4c6c6] flex items-center justify-center"><Ico w={8} h={5}><path d="M0 0h8L4 5Z" fill="#666" /></Ico></span>
          </span>
          <span className="ml-[90px] mr-[18px] w-[165px] h-[24px] bg-[#f9fafb] border border-[#c0c2c4] flex items-center pl-[8px]">
            <span className="flex-1">Все</span>
            <span className="w-[16px] h-full border-l border-[#c0c2c4] flex items-center justify-center"><Ico w={8} h={5}><path d="M0 0h8L4 5Z" fill="#666" /></Ico></span>
          </span>
        </div>
      </div>

      <Taskbar />
    </div>
  );
}
